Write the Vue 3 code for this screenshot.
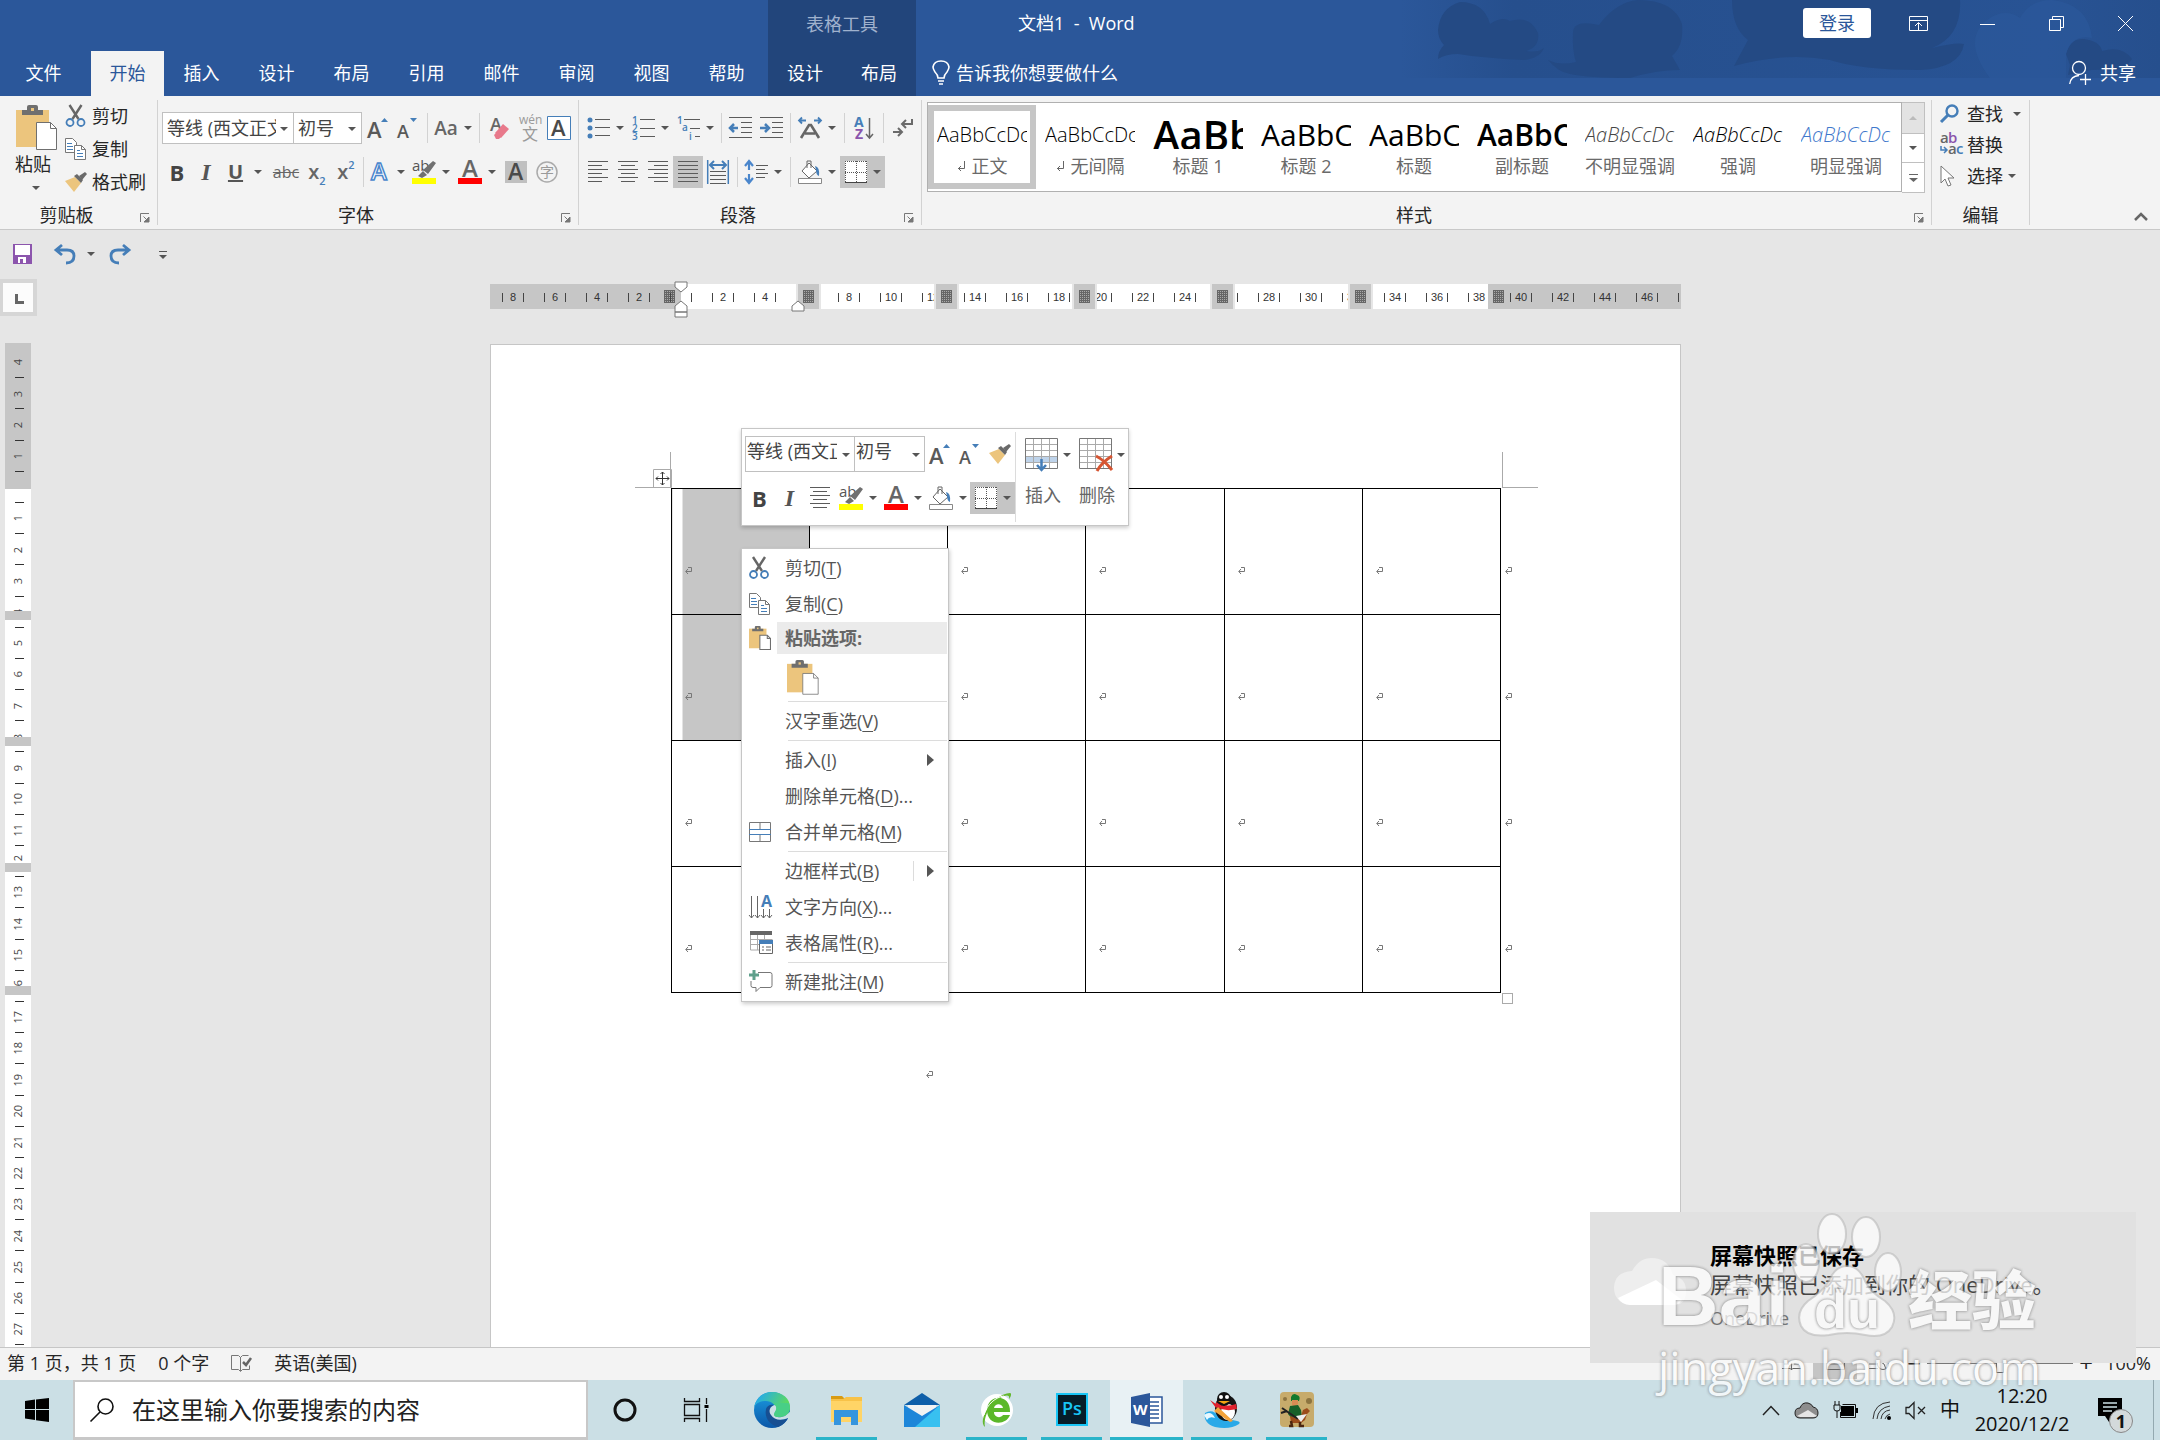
<script setup>
import { h } from 'vue'

const F = 'font-family="Open Sans, Noto Sans CJK SC, sans-serif"'
const brush = '<path d="M1 9l10-4 6 6-7 9z" fill="#ecc57d"/><path d="M10 4l3-2 6 6-2 3z" fill="#6a6a6a"/><path d="M15 4l6-4 2 2-5 6z" fill="#6a6a6a"/>'
const rows = (list, c = '#5b5b5b') => list.map(([x1, x2, y]) => `<path d="M${x1} ${y}.5H${x2}" stroke="${c}"/>`).join('')
const lines = {
  left: [[0, 20, 1], [0, 14, 5], [0, 20, 9], [0, 14, 13], [0, 20, 17], [0, 14, 21]],
  center: [[0, 20, 1], [3, 17, 5], [0, 20, 9], [3, 17, 13], [0, 20, 17], [3, 17, 21]],
  right: [[0, 20, 1], [6, 20, 5], [0, 20, 9], [6, 20, 13], [0, 20, 17], [6, 20, 21]],
  full: [[0, 20, 1], [0, 20, 5], [0, 20, 9], [0, 20, 13], [0, 20, 17], [0, 20, 21]]
}
const clip = '<path d="M0 5h33v37H0z" fill="#ecc57d"/><path d="M6 5h5V2q0-2 2-2h7q2 0 2 2v3h5v5H6z" fill="#6f6f6f"/><path d="M15 3h3v3h-3z" fill="#ecc57d"/><path d="M20.5 17.500h14l6 6v21h-20z" fill="#fff" stroke="#6f6f6f"/><path d="M34.500 17.500v6h6" fill="none" stroke="#6f6f6f"/>'

const icons = {
  caret: [8, 4, '<path d="M0 0h8L4 4z" fill="#555"/>'],
  caretRight: [7, 12, '<path d="M0 0l7 6-7 6z" fill="#555"/>'],
  paste: [41, 45, clip],
  pasteBig: [32, 35, `<g transform="scale(.77)">${clip}</g>`],
  pasteSmall: [22, 24, `<g transform="scale(.53)">${clip.replaceAll('stroke="#6f6f6f"', 'stroke="#6f6f6f" stroke-width="2"')}</g>`],
  cut: [20, 22, '<path d="M4 0l9 14M16 0L7 14" stroke="#666" stroke-width="2.400" fill="none"/><circle cx="4.500" cy="17.500" r="3.500" fill="none" stroke="#457eb8" stroke-width="1.800"/><circle cx="15.500" cy="17.500" r="3.500" fill="none" stroke="#457eb8" stroke-width="1.800"/>'],
  copy: [21, 22, '<path d="M.5.5h7l4 4v10H.5z" fill="#fff" stroke="#777"/><path d="M2 5.500h5M2 8.500h6M2 11.500h6" stroke="#457eb8"/><path d="M9.500 7.500h7l4 4v10h-11z" fill="#fff" stroke="#777"/><path d="M16.500 7.500v4h4" fill="none" stroke="#777"/><path d="M12 12.500h3M12 15.500h6M12 18.500h6" stroke="#457eb8"/>'],
  brush: [23, 20, brush],
  launcher: [10, 10, '<path d="M.5 9V.5H9" fill="none" stroke="#777"/><path d="M3.500 3.500L8 8M9 4v5H4z" stroke="#777" fill="#777"/>'],
  grow: [22, 24, `<text x="0" y="22" font-size="22" font-weight="600" fill="#595959" ${F}>A</text><path d="M14 6h7l-3.500-4z" fill="#457eb8"/>`],
  shrink: [22, 24, `<text x="0" y="22" font-size="18" font-weight="600" fill="#595959" ${F}>A</text><path d="M13 2h7l-3.500 4z" fill="#457eb8"/>`],
  clear: [22, 24, `<text x="0" y="15" font-size="18" font-weight="600" fill="#666" ${F}>A</text><path d="M5 17l8-9 6 5-8 9z" fill="#e8798b"/><path d="M4 19l2-2 5 4-2 2H6z" fill="#e8798b"/>`],
  wen: [22, 28, `<text x="0" y="10" font-size="12" fill="#9a9a9a" ${F}>wén</text><text x="3" y="26" font-size="16" fill="#9a9a9a" ${F}>文</text>`],
  boxed: [24, 24, `<path d="M.5.5h23v23H.5z" fill="#fff" stroke="#457eb8"/><text x="4" y="20" font-size="22" font-weight="600" fill="#4a4a4a" ${F}>A</text>`],
  outline: [22, 24, `<text x="2" y="20" font-size="24" font-weight="600" fill="#fff" stroke="#4a86cc" stroke-width="1.500" ${F}>A</text>`],
  highlight: [24, 24, `<text x="0" y="11" font-size="15" fill="#555" ${F}>ab</text><path d="M6 16l5-5 4 4-5 3zM11 10L21 1l3 2-8 11z" fill="#707070"/><path d="M0 18h24v6H0z" fill="#ff0"/>`],
  fontColor: [24, 24, `<text x="4" y="17" font-size="24" font-weight="600" fill="#666" ${F}>A</text><path d="M0 18h24v6H0z" fill="red"/>`],
  shaded: [22, 22, `<path d="M0 0h22v22H0z" fill="#c0c0c0"/><text x="3" y="19" font-size="23" font-weight="600" fill="#4a4a4a" ${F}>A</text>`],
  circled: [22, 22, `<circle cx="11" cy="11" r="10" fill="none" stroke="#aaa" stroke-width="1.500"/><text x="4" y="16" font-size="14" fill="#9a9a9a" ${F}>字</text>`],
  bullets: [23, 22, '<g fill="#457eb8"><circle cx="3" cy="3" r="2.500"/><circle cx="3" cy="11" r="2.500"/><circle cx="3" cy="19" r="2.500"/></g>' + rows([[8, 23, 2], [8, 23, 10], [8, 23, 18]])],
  numbers: [23, 24, `<g fill="#457eb8" font-size="10" font-weight="600" ${F}><text x="0" y="8">1</text><text x="0" y="16">2</text><text x="0" y="24">3</text></g>` + rows([[8, 23, 3], [8, 23, 12], [8, 23, 20]])],
  levels: [23, 24, `<g fill="#457eb8" font-size="10" font-weight="600" ${F}><text x="0" y="8">1</text><text x="5" y="15">a</text><text x="12" y="24">i</text></g>` + rows([[7, 23, 3], [13, 23, 12], [18, 23, 20]])],
  outdent: [23, 22, rows([[0, 23, 0], [12, 23, 5], [12, 23, 10], [12, 23, 15], [0, 23, 20]]) + '<path d="M9 11H2M5 7l-4 4 4 4" stroke="#457eb8" stroke-width="2.500" fill="none"/>'],
  indent: [23, 22, rows([[0, 23, 0], [12, 23, 5], [12, 23, 10], [12, 23, 15], [0, 23, 20]]) + '<path d="M0 11h7M5 7l4 4-4 4" stroke="#457eb8" stroke-width="2.500" fill="none"/>'],
  asian: [24, 22, '<path d="M1 3.500h7M4 .5l-3 3 3 3M23 3.500h-7M20 .5l3 3-3 3" stroke="#457eb8" stroke-width="1.800" fill="none"/><path d="M3 21l8-13h2l8 13M7 16.500h10" stroke="#666" stroke-width="2.600" fill="none"/>'],
  sort: [20, 24, `<text x="0" y="11" font-size="14" font-weight="700" fill="#457eb8" ${F}>A</text><text x="1" y="23" font-size="14" font-weight="700" fill="#8a55ac" ${F}>Z</text><path d="M15.500 2v20M12 18l3.500 4 3.500-4" stroke="#666" stroke-width="1.500" fill="none"/>`],
  marks: [20, 20, '<path d="M19 1v5h-9M13 2L9 6l4 4M0 14h8M5 10l4 4-4 4" stroke="#6a6a6a" stroke-width="2" fill="none"/>'],
  left: [20, 24, rows(lines.left)],
  center: [20, 24, rows(lines.center)],
  right: [20, 24, rows(lines.right)],
  full: [20, 24, rows(lines.full)],
  spread: [22, 24, '<path d="M.7 0v24M21.300 0v24" stroke="#457eb8" stroke-width="1.500"/><path d="M4 5h14M7 1L3 5l4 4M15 1l4 4-4 4" stroke="#457eb8" stroke-width="2" fill="none"/>' + rows([[3, 19, 11], [3, 19, 15], [3, 19, 19], [3, 19, 23]])],
  spacing: [23, 24, '<path d="M4 2v8M4 14v8M0 6l4-5 4 5M0 18l4 5 4-5" stroke="#4a86cc" stroke-width="2.200" fill="none"/>' + rows([[11, 23, 5], [11, 20, 9], [11, 23, 13], [11, 20, 17]])],
  bucket: [24, 24, '<path d="M4 11l7-8 8 8-8 7z" fill="#fff" stroke="#666"/><path d="M9 8V1h4v7" fill="none" stroke="#666"/><path d="M17 6q5 1 4 10-3-1-3-6z" fill="#457eb8"/><path d="M.5 18.500h23v5H.5z" fill="#fff" stroke="#888"/>'],
  borders: [22, 22, '<path d="M0 0h22v22H0z" fill="#fff"/><path d="M.5 0v21M11.500 0v21M21.500 0v21M0 .5h22M0 11.500h22" stroke="#555" stroke-dasharray="1 1"/><path d="M0 21.500h22" stroke="#444"/>'],
  find: [19, 20, '<circle cx="12" cy="7" r="5.500" fill="none" stroke="#457eb8" stroke-width="2.400"/><path d="M8 11l-7 7" stroke="#457eb8" stroke-width="3"/>'],
  replace: [23, 24, `<g font-size="15" font-weight="600" ${F}><text x="0" y="10" fill="#666">a</text><text x="8" y="10" fill="#8a55ac">b</text><text x="8" y="21" fill="#666">a</text><text x="16" y="21" fill="#457eb8">c</text></g><path d="M1 13v4h5M4 14l3 3-3 3" stroke="#457eb8" stroke-width="1.500" fill="none"/>`],
  pointer: [15, 22, '<path d="M1 1v17l4-4 3 7 3-1-3-7h6z" fill="#fff" stroke="#777"/>'],
  save: [19, 20, '<path d="M0 0h19v20H0z" fill="#8c55ad"/><path d="M2 1h15v10H2zM5 13h8v6H5z" fill="#fff"/><path d="M7 15h3v4H7z" fill="#8c55ad"/>'],
  undo: [22, 20, '<path d="M2 6h11q7 0 7 6 0 7-8 7M8 1L2 6l6 5" fill="none" stroke="#457eb8" stroke-width="2.800"/>'],
  redo: [22, 20, '<path d="M20 6H9q-7 0-7 6 0 7 8 7M14 1l6 5-6 5" fill="none" stroke="#457eb8" stroke-width="2.800"/>'],
  more: [8, 8, '<path d="M0 0h8v1H0zM0 4h8L4 8z" fill="#555"/>'],
  moreStyles: [9, 8, '<path d="M0 0h9v1H0zM0 4h9L4.500 8z" fill="#666"/>'],
  up: [8, 4, '<path d="M0 4h8L4 0z" fill="#bbb"/>'],
  collapse: [14, 9, '<path d="M1 8l6-6 6 6" fill="none" stroke="#666" stroke-width="2.500"/>'],
  bulb: [18, 25, '<path d="M6 18q0-3-3-6-2-3-2-5 1-6 8-6t8 6q0 2-2 5-3 3-3 6zM6 21h6M7 24h4" fill="none" stroke="#fff" stroke-width="1.600"/>'],
  ribbonMode: [19, 15, '<path d="M.5.5h18v14H.5zM0 4.500h19M9.500 14V7M6 10l3.500-3.500L13 10" fill="none" stroke="#fff"/>'],
  min: [15, 15, '<path d="M0 8.500h15" stroke="#fff"/>'],
  restore: [15, 15, '<path d="M.5 3.500h11v11H.5zM3.500 3V.5h11v11H12" fill="none" stroke="#fff"/>'],
  close: [15, 15, '<path d="M0 0l15 15M15 0L0 15" stroke="#fff"/>'],
  share: [23, 24, '<circle cx="10" cy="7" r="6.500" fill="none" stroke="#fff" stroke-width="1.300"/><path d="M.7 23q1-8 9.300-8.500M11 18.500h11M16.500 13v11" fill="none" stroke="#fff" stroke-width="1.300"/>'],
  tabStop: [9, 10, '<path d="M1.500 0v8.500H9" fill="none" stroke="#666" stroke-width="3"/>'],
  ret: [7, 8, '<path d="M3 .5h3.500v4H1M3 2L.7 4.500 3 7" fill="none" stroke="#777"/>'],
  retStyle: [8, 10, '<path d="M7.500 0v7.500H1M4 5L1.500 7.500 4 10" fill="none" stroke="#666"/>'],
  move: [19, 19, '<path d="M.5.5h18v18H.5z" fill="#fff" stroke="#aaa"/><path d="M9.500 3v13M3 9.500h13M7.500 5l2-2 2 2M7.500 14l2 2 2-2M5 7.500l-2 2 2 2M14 7.500l2 2-2 2" fill="none" stroke="#333"/>'],
  insertCells: [34, 35, '<path d="M.5 1.500h32v30H.5z" fill="#fff" stroke="#777"/><path d="M1 19h31v6H1z" fill="#bed3ea"/><path d="M8.500 2v29M16.500 2v29M24.500 2v29M1 7.500h31M1 13.500h31M1 19.500h31M1 25.500h31" stroke="#aaa"/><path d="M16.500 22v11M12 28l4.500 5 4.500-5" fill="none" stroke="#457eb8" stroke-width="2.500"/>'],
  deleteCells: [34, 34, '<path d="M.5.5h32v30H.5z" fill="#fff" stroke="#777"/><path d="M8.500 1v29M16.500 1v29M24.500 1v29M1 6.500h31M1 12.500h31M1 18.500h31M1 24.500h31" stroke="#aaa"/><path d="M17 18q8 4 16 14M33 18q-10 6-15 15" fill="none" stroke="#d65532" stroke-width="3"/>'],
  merge: [22, 20, '<path d="M.5.5h21v19H.5zM11 0v7M11 13v7" fill="none" stroke="#777"/><path d="M0 7.500h22M0 12.500h22" stroke="#457eb8"/>'],
  direction: [24, 25, `<text x="12" y="12" font-size="16" font-weight="700" fill="#457eb8" ${F}>A</text><path d="M2.500 1v22M8.500 1v22M14.500 14v9M20.500 14v9M0 20l2.500 3L5 20M6 20l2.500 3 2.500-3M12 20l2.500 3 2.500-3M18 20l2.500 3 2.500-3" fill="none" stroke="#666"/>`],
  props: [24, 24, '<path d="M1.500 1v18H10M1.500 8.500h22M1.500 13.500H10M8.500 4v15M15.500 4v6" fill="none" stroke="#aaa"/><path d="M1 0h22v4H1z" fill="#666"/><path d="M10.500 9.500h13v13h-13z" fill="#fff" stroke="#666"/><path d="M10 9h14v4H10z" fill="#457eb8"/><path d="M13 16h2M13 19h2M17 16h5M17 19h5" stroke="#666"/>'],
  comment: [24, 24, '<path d="M9 2.500h12q2 0 2 2v11q0 2-2 2H11l-4 4v-4H4q-2 0-2-2V11" fill="none" stroke="#777"/><path d="M5 0v10M0 5h10" stroke="#5fa08c" stroke-width="3"/>'],
  book: [21, 20, '<path d="M.5 2.500h7l2 2 2-2h6M.5 2.500v14h7l2 2 2-2h7v-4M9.500 4v14" fill="none" stroke="#777"/><path d="M12 9l3 3 5-7" fill="none" stroke="#666" stroke-width="2.500"/>'],
  readView: [19, 14, '<path d="M0 1.500h8l1.500 1 1.500-1h8M0 12.500h8l1.500 1 1.500-1h8M9.500 3v11M2 5h5M2 8h5M12 5h5M12 8h5" stroke="#666" fill="none"/>'],
  printView: [19, 14, '<path d="M.5 1.500h18v12H.5zM3 5h13M3 8h13" stroke="#666" fill="none"/>'],
  webView: [20, 14, '<path d="M0 1.500h12M0 5h8M0 8h8M0 12.500h9" stroke="#666"/><circle cx="14" cy="8" r="5.500" fill="none" stroke="#666"/><path d="M10 5l5 3 2 5" stroke="#666" fill="none"/>'],
  windows: [24, 24, '<path d="M0 3l10-1.500V11H0zM11 1.400L24 0v11H11zM0 12h10v10L0 20.500zM11 12h13v12l-13-1.700z"/>'],
  search: [24, 24, '<circle cx="15.500" cy="8.500" r="7.500" fill="none" stroke="#111" stroke-width="1.600"/><path d="M10 14l-9.500 9.500" stroke="#111" stroke-width="1.600"/>'],
  cortana: [24, 24, '<circle cx="12" cy="12" r="10" fill="none" stroke="#111" stroke-width="3"/>'],
  taskView: [25, 24, '<path d="M1.500 0v3.500h15V0M1.500 24v-3.500h15V24M1.500 6.500h15v11h-15zM23.500 0v6M23.500 11v13" fill="none" stroke="#111" stroke-width="1.300"/><path d="M21.500 7h4v3h-4z"/>'],
  edge: [38, 38, '<defs><linearGradient id="eg" x1="0" y1="0" x2="1" y2=".4"><stop offset=".2" stop-color="#28aee0"/><stop offset="1" stop-color="#5fdc57"/></linearGradient><linearGradient id="eb" x1="0" y1="0" x2="0" y2="1"><stop stop-color="#1b9de2"/><stop offset="1" stop-color="#0b57a8"/></linearGradient></defs><circle cx="19" cy="19" r="18" fill="url(#eb)"/><path d="M1 17C3 6 11 1 19 1c11 0 18 7 18 15 0 7-5 10-11 10-5 0-6-2-4-5 3-5-2-11-9-11-6 0-11 3-12 7z" fill="url(#eg)"/><path d="M13 18c-2 9 4 16 12 18 5-2 8-5 10-9-6 3-16 2-18-7 0-4 2-5 4-6-4-1-7 1-8 4z" fill="#174f92"/><path d="M22 14c-5 1-7 6-4 10 3 5 10 6 17 3l3 6 0-13-6 5c-9 3-12 0-10-4 2-2 2-5 0-7z" fill="#cbdfe5"/><path d="M22 21c3-5 0-8-2-9h16c3 9-3 14-10 14-5 0-6-2-4-5z" fill="#48cf86"/>'],
  folder: [34, 30, '<path d="M1 1h11l4 4H1z" fill="#d99b12"/><path d="M1 5h31v22H1z" fill="#ffd466"/><path d="M4 30V15h24v15h-7v-8H11v8z" fill="#3595de"/><path d="M1 4h12l3-2h16v4H1z" fill="#f8c248"/>'],
  mail: [38, 36, '<path d="M1 13L19 1l18 12z" fill="#0f5fa9"/><path d="M5 13h28v15H5z" fill="#f3f3f3"/><path d="M1 13l18 11L37 13v22H1z" fill="#1d86d9"/><path d="M37 13L12 35h25z" fill="#38c0f0"/>'],
  browser: [36, 38, '<circle cx="18" cy="19" r="16" fill="#fff"/><path d="M8 21h23c1-18-22-19-23-2 0 16 19 16 23 5h-7c-3 4-9 2-9-3" fill="#5bb82a"/><path d="M15 17h9c-1-5-8-5-9 0z" fill="#fff"/><path d="M6 36C-2 29 14 3 31 2c2 0 1 4-1 6 1-4-2-4-5-3C13 10 4 24 6 36z" fill="#62b82c"/><path d="M5 24C8 13 17 6 25 5" stroke="#fff" fill="none"/>'],
  ps: [34, 34, `<path d="M1 0h32v33H1z" fill="#19c5f5"/><path d="M3 2h28v29H3z" fill="#061d29"/><text x="7" y="22" font-size="18" font-weight="600" fill="#19c5f5" ${F}>Ps</text>`],
  word: [34, 34, `<path d="M16 4h16v26H16z" fill="#fff" stroke="#2b579a" stroke-width="1.500"/><path d="M20 9h9M20 13h9M20 17h9M20 21h9M20 25h9" stroke="#2b579a" stroke-width="1.500"/><path d="M1 4l19-4v34L1 30z" fill="#2b579a"/><text x="3" y="22" font-size="15" font-weight="700" fill="#fff" ${F}>W</text>`],
  qq: [38, 38, '<path d="M2 22q8-5 14 4l18 4q4 1 2 3-9 6-24 3Q0 32 2 22z" fill="#29a9e8"/><path d="M1 24q7-5 11 3-6-2-8 2z" fill="#e7f8ff"/><ellipse cx="23" cy="17" rx="11" ry="13" fill="#151515"/><ellipse cx="25" cy="21" rx="7" ry="8" fill="#fff"/><path d="M13 11q8 6 20 2l1 5q-12 3-21-2zM7 9l9 6-3 2z" fill="#e2202c"/><circle cx="21" cy="8" r="7" fill="#111"/><circle cx="18" cy="6" r="2" fill="#fff"/><circle cx="24" cy="6" r="2" fill="#fff"/><path d="M15 10h12l-6 3z" fill="#f2a313"/><path d="M15 16l15 14-3 1-16-11z" fill="#f4a33a"/>'],
  game: [36, 38, '<rect x="1" y="1" width="34" height="35" rx="4" fill="#c7ab6b"/><circle cx="30" cy="10" r="3" fill="#8c7440"/><circle cx="6" cy="8" r="2" fill="#8c7440"/><path d="M12 6q2-5 6-2 4 1 2 6h-8z" fill="#127a2d"/><path d="M13 9h6v4l-3 3-3-2z" fill="#d98b54"/><path d="M11 15l8-1 3 5 1 7-9 3-5-6z" fill="#17602a"/><path d="M11 25l10 3 3-9 4-2 3 3-3 3-2 6-4 3H12z" fill="#9b4c1b"/><path d="M3 17l16 11M2 22l6-2" stroke="#222" stroke-width="2"/><path d="M17 25l11-2-6 8z" fill="#eee"/><path d="M12 30l1 5h-3M21 31v4h4" stroke="#4b2610" stroke-width="2.500" fill="none"/>'],
  chevron: [18, 11, '<path d="M1 10l8-8.500L17 10" fill="none" stroke="#222" stroke-width="1.500"/>'],
  cloud: [25, 18, '<path d="M6 17q-5 0-5-5t5-5q2-6 8-5 4 1 5 4 5 1 5 6t-5 5z" fill="#8d8d8d" stroke="#222"/><path d="M3 15l11-6 9 6-3 1H6z" fill="#e5e5e5"/>'],
  battery: [25, 18, '<path d="M9.500 3.500h13v13h-15V11" fill="none" stroke="#111"/><path d="M8 5h13v10H8zM23 7h2v5h-2z"/><path d="M1 4h6v4q0 2-3 2t-3-2zM4 10v7M2 0v4M6 0v4" fill="#cbdfe5" stroke="#111"/>'],
  wifi: [19, 19, '<g fill="none" stroke="#333"><path d="M1 18Q2 2 18 1M5 18Q6 7 18 5M9 18q1-8 9-9M13 18q1-4 5-5"/></g><circle cx="17" cy="17" r="2"/>'],
  mute: [21, 19, '<path d="M1 6.500h3l5-5v16l-5-5H1z" fill="none" stroke="#222" stroke-width="1.300"/><path d="M13 6l7 7M20 6l-7 7" stroke="#222" stroke-width="1.300"/>'],
  notice: [24, 24, '<path d="M0 0h24v18h-9l-4 6-4-6H0z"/><path d="M5 5h14M5 9h14M5 13h9" stroke="#cbdfe5" stroke-width="1.300"/>'],
  toastCloud: [72, 48, '<path d="M14 46Q0 44 0 29 1 14 18 13 25 0 38 0q16 0 21 17 13 3 13 16 0 14-12 14H16z" fill="#eee"/><path d="M4 40l38-18 26 20q-3 5-9 5H16q-8 0-12-7z" fill="#fff"/>'],
  paw: [110, 126, '<g fill="#fff" stroke="#b5b5b5" stroke-opacity=".7" stroke-width="2"><ellipse cx="38" cy="22" rx="14" ry="20"/><ellipse cx="72" cy="25" rx="14" ry="20"/><ellipse cx="12" cy="51" rx="13" ry="19"/><ellipse cx="94" cy="60" rx="13" ry="19"/><path d="M53 54q12 0 18 15 5 11 20 20 14 12 7 26-7 12-27 8-18-4-36 0-22 3-28-9-6-14 7-25 15-10 21-20 6-15 18-15z"/></g>'],
  indentTop: [14, 12, '<path d="M1 1h12v5l-6 5-6-5z" fill="#fff" stroke="#777"/>'],
  indentBottom: [14, 18, '<path d="M1 12V6l6-5 6 5v6zM1 12h12v5H1z" fill="#fff" stroke="#777"/>'],
  indentRight: [14, 12, '<path d="M1 11V6l6-5 6 5v5z" fill="#fff" stroke="#777"/>']
}

const Icon = (p) => {
  const [w, hh, body] = icons[p.name]
  return h('svg', { width: w, height: hh, viewBox: `0 0 ${w} ${hh}`, 'aria-hidden': 'true', innerHTML: body })
}
Icon.props = ['name']

const tabs = ['插入', '设计', '布局', '引用', '邮件', '审阅', '视图', '帮助']
const styles = [
  { label: '正文', cls: 'body', text: 'AaBbCcDc', mark: true },
  { label: '无间隔', cls: 'body', text: 'AaBbCcDc', mark: true },
  { label: '标题 1', cls: 'h1', text: 'AaBb' },
  { label: '标题 2', cls: 'h2', text: 'AaBbC' },
  { label: '标题', cls: 'h2', text: 'AaBbC' },
  { label: '副标题', cls: 'h2 strong', text: 'AaBbC' },
  { label: '不明显强调', cls: 'body it soft', text: 'AaBbCcDc' },
  { label: '强调', cls: 'body it', text: 'AaBbCcDc' },
  { label: '明显强调', cls: 'body it accent', text: 'AaBbCcDc' }
]
const ruler = Array.from({ length: 29 }, (_, i) => i * 2 - 8)
const vruler = Array.from({ length: 32 }, (_, i) => i - 4)
const apps = [
  { icon: 'edge', name: 'Edge' },
  { icon: 'folder', name: '文件资源管理器', open: true },
  { icon: 'mail', name: '邮件' },
  { icon: 'browser', name: '浏览器', open: true },
  { icon: 'ps', name: 'Photoshop', open: true },
  { icon: 'word', name: 'Word', open: true, active: true },
  { icon: 'qq', name: 'QQ', open: true },
  { icon: 'game', name: '游戏', open: true }
]
</script>

<template>
  <div class="desktop">
    <header class="top">
      <svg class="art" width="760" height="78" viewBox="0 0 760 78" aria-hidden="true">
        <defs><linearGradient id="fade"><stop stop-color="#264f8d" stop-opacity="0" /><stop offset=".15" stop-color="#264f8d" /><stop offset=".85" stop-color="#285394" /><stop offset="1" stop-color="#264f8d" /></linearGradient></defs>
        <path d="M0 0h760v78H0z" fill="url(#fade)" />
        <g fill="#244a84">
          <path d="M38 30Q40 8 60 2q24 0 30 22 12-8 20-3 20-6 28 12 2 14-12 18 12 2 18-3-4 10-20 12-40-2-66-6-12 0-20 5 0-8 6-14-6-6-6-15z" />
          <path d="M173 33q0-14 26-8Q216 2 238 0q36 0 44 24 2 22-10 32l8 14q-24 0-50 8-40 0-60-4-12-2-22-14 12 6 28 2-4-12-3-29z" />
          <path d="M332 0h228q2 36-28 48 24-6 32-4-4 24-44 26-60 0-90-10-46-8-96 6l14-26q-16-12-16-40z" />
          <path d="M666 54q4-16 18-15 16 2 18 12 20-6 30 8-6 10-20 12-18-4-44 4l2-10z" />
        </g>
        <path d="M590 78q-30-40 0-60 16-10 30 0Q630 0 652 0q36 4 40 38-20-4-26 16v24z" fill="#2b579a" opacity=".8" />
      </svg>
      <div class="blank"></div>
      <div class="context-title">表格工具</div>
      <div class="title-row">
        <h1>文档1&nbsp; -&nbsp; Word</h1>
        <div class="window-controls">
          <button class="login">登录</button>
          <button aria-label="功能区显示选项"><Icon name="ribbonMode" /></button>
          <button aria-label="最小化"><Icon name="min" /></button>
          <button aria-label="还原"><Icon name="restore" /></button>
          <button aria-label="关闭"><Icon name="close" /></button>
        </div>
      </div>
      <nav class="tabs">
        <button class="file">文件</button>
        <button class="home">开始</button>
        <button v-for="t in tabs" :key="t">{{ t }}</button>
      </nav>
      <nav class="context-tabs"><button>设计</button><button>布局</button></nav>
      <div class="tell-row">
        <button class="tell"><Icon name="bulb" />告诉我你想要做什么</button>
        <button class="share"><Icon name="share" />共享</button>
      </div>
    </header>

    <section class="ribbon">
      <div class="group clipboard">
        <div class="clip-body">
          <button class="paste"><Icon name="paste" /><span>粘贴</span><Icon name="caret" /></button>
          <div class="clip-list">
            <button><Icon name="cut" />剪切</button>
            <button><Icon name="copy" />复制</button>
            <button><Icon name="brush" />格式刷</button>
          </div>
        </div>
        <footer><span>剪贴板</span><button aria-label="剪贴板选项"><Icon name="launcher" /></button></footer>
      </div>

      <div class="group font">
        <div class="rows">
          <div class="row font-one">
            <div class="combo"><select aria-label="字体"><option>等线 (西文正文)</option></select><Icon name="caret" /></div>
            <div class="combo"><select aria-label="字号"><option>初号</option></select><Icon name="caret" /></div>
            <button aria-label="增大字号"><Icon name="grow" /></button>
            <button aria-label="减小字号"><Icon name="shrink" /></button>
            <i class="sep"></i>
            <button class="split"><span class="aa">Aa</span><Icon name="caret" /></button>
            <i class="sep"></i>
            <button aria-label="清除格式"><Icon name="clear" /></button>
            <button aria-label="拼音指南"><Icon name="wen" /></button>
            <button aria-label="字符边框"><Icon name="boxed" /></button>
          </div>
          <div class="row font-two">
            <button class="b">B</button>
            <button class="i">I</button>
            <button class="split wide"><u class="u">U</u><Icon name="caret" /></button>
            <button><s>abc</s></button>
            <button class="script">x<sub>2</sub></button>
            <button class="script">x<sup>2</sup></button>
            <i class="sep"></i>
            <button class="split" aria-label="文本效果"><Icon name="outline" /><Icon name="caret" /></button>
            <button class="split" aria-label="突出显示"><Icon name="highlight" /><Icon name="caret" /></button>
            <button class="split" aria-label="字体颜色"><Icon name="fontColor" /><Icon name="caret" /></button>
            <button aria-label="字符底纹"><Icon name="shaded" /></button>
            <button aria-label="带圈字符"><Icon name="circled" /></button>
          </div>
        </div>
        <footer><span>字体</span><button aria-label="字体选项"><Icon name="launcher" /></button></footer>
      </div>

      <div class="group para">
        <div class="rows">
          <div class="row para-one">
            <button class="split" aria-label="项目符号"><Icon name="bullets" /><Icon name="caret" /></button>
            <button class="split" aria-label="编号"><Icon name="numbers" /><Icon name="caret" /></button>
            <button class="split" aria-label="多级列表"><Icon name="levels" /><Icon name="caret" /></button>
            <i class="sep"></i>
            <button aria-label="减少缩进"><Icon name="outdent" /></button>
            <button aria-label="增加缩进"><Icon name="indent" /></button>
            <i class="sep"></i>
            <button class="split" aria-label="中文版式"><Icon name="asian" /><Icon name="caret" /></button>
            <i class="sep"></i>
            <button aria-label="排序"><Icon name="sort" /></button>
            <i class="sep"></i>
            <button aria-label="编辑标记"><Icon name="marks" /></button>
          </div>
          <div class="row para-two">
            <button aria-label="左对齐"><Icon name="left" /></button>
            <button aria-label="居中"><Icon name="center" /></button>
            <button aria-label="右对齐"><Icon name="right" /></button>
            <button class="on" aria-label="两端对齐"><Icon name="full" /></button>
            <button aria-label="分散对齐"><Icon name="spread" /></button>
            <i class="sep"></i>
            <button class="split" aria-label="行距"><Icon name="spacing" /><Icon name="caret" /></button>
            <i class="sep"></i>
            <button class="split" aria-label="底纹"><Icon name="bucket" /><Icon name="caret" /></button>
            <button class="split on" aria-label="边框"><Icon name="borders" /><Icon name="caret" /></button>
          </div>
        </div>
        <footer><span>段落</span><button aria-label="段落选项"><Icon name="launcher" /></button></footer>
      </div>

      <div class="group style-group">
        <div class="gallery">
          <div class="cells">
            <button v-for="(s, n) in styles" :key="s.label" :class="{ picked: n === 0 }">
              <span class="sample" :class="s.cls">{{ s.text }}</span>
              <span class="name"><Icon v-if="s.mark" name="retStyle" />{{ s.label }}</span>
            </button>
          </div>
          <div class="scroll">
            <button class="off" aria-label="上一行"><Icon name="up" /></button>
            <button aria-label="下一行"><Icon name="caret" /></button>
            <button aria-label="其他"><Icon name="moreStyles" /></button>
          </div>
        </div>
        <footer><span>样式</span><button aria-label="样式选项"><Icon name="launcher" /></button></footer>
      </div>

      <div class="group edit">
        <div class="edit-list">
          <button><span class="ico"><Icon name="find" /></span>查找<Icon name="caret" class="far" /></button>
          <button><span class="ico"><Icon name="replace" /></span>替换</button>
          <button><span class="ico"><Icon name="pointer" /></span>选择<Icon name="caret" class="near" /></button>
        </div>
        <footer><span>编辑</span></footer>
      </div>
      <button class="collapse" aria-label="折叠功能区"><Icon name="collapse" /></button>
    </section>

    <div class="quick">
      <button aria-label="保存"><Icon name="save" /></button>
      <button class="undo" aria-label="撤消"><Icon name="undo" /><Icon name="caret" /></button>
      <button aria-label="恢复"><Icon name="redo" /></button>
      <button class="custom" aria-label="自定义"><Icon name="more" /></button>
    </div>

    <main class="work">
      <div class="side">
        <button class="stop" aria-label="制表符"><Icon name="tabStop" /></button>
        <div class="vruler">
          <div class="vcells"><div v-for="n in vruler" :key="n"><span v-if="n">{{ Math.abs(n) }}</span></div></div>
          <i v-for="k in 4" :key="k" class="vbar" :class="'v' + k"></i>
        </div>
      </div>
      <div class="canvas">
        <div class="hruler">
          <div class="hcells"><div v-for="n in ruler" :key="n"><span v-if="n">{{ Math.abs(n) }}</span></div></div>
          <div class="stops"><i v-for="k in 6" :key="k"><b></b></i></div>
          <Icon name="indentTop" class="ind top-ind" />
          <Icon name="indentBottom" class="ind bot-ind" />
          <Icon name="indentRight" class="ind right-ind" />
        </div>
        <article class="page">
          <div class="sheet">
            <Icon name="move" class="move" />
            <i class="corner cl"></i><i class="corner cr"></i>
            <table>
              <tbody>
                <tr v-for="r in 4" :key="r">
                  <td v-for="c in 6" :key="c" :class="{ sel: c === 1 && r < 3 }">
                    <Icon name="ret" />
                    <Icon v-if="c === 6" name="ret" class="row-end" />
                  </td>
                </tr>
              </tbody>
            </table>
            <i class="resize"></i>
          </div>
          <Icon name="ret" class="end-mark" />

          <div class="mini">
            <div class="mini-left">
              <div class="mini-one">
                <div class="combo"><select aria-label="浮动字体"><option>等线 (西文正文)</option></select><Icon name="caret" /></div>
                <div class="combo"><select aria-label="浮动字号"><option>初号</option></select><Icon name="caret" /></div>
                <button aria-label="增大"><Icon name="grow" /></button>
                <button aria-label="减小"><Icon name="shrink" /></button>
                <button aria-label="格式刷"><Icon name="brush" /></button>
              </div>
              <div class="mini-two">
                <button class="b">B</button>
                <button class="i">I</button>
                <button aria-label="居中"><Icon name="center" /></button>
                <button class="split" aria-label="突出显示"><Icon name="highlight" /><Icon name="caret" /></button>
                <button class="split" aria-label="字体颜色"><Icon name="fontColor" /><Icon name="caret" /></button>
                <button class="split" aria-label="底纹"><Icon name="bucket" /><Icon name="caret" /></button>
                <button class="split on" aria-label="边框"><Icon name="borders" /><Icon name="caret" /></button>
              </div>
            </div>
            <button class="big"><span><Icon name="insertCells" /><Icon name="caret" /></span>插入</button>
            <button class="big"><span><Icon name="deleteCells" /><Icon name="caret" /></span>删除</button>
          </div>

          <div class="menu" role="menu">
            <button><span class="ico"><Icon name="cut" /></span>剪切(<u>T</u>)</button>
            <button><span class="ico"><Icon name="copy" /></span>复制(<u>C</u>)</button>
            <div class="head"><span class="ico"><Icon name="pasteSmall" /></span><strong>粘贴选项:</strong></div>
            <button class="paste-opt" aria-label="粘贴"><Icon name="pasteBig" /></button>
            <hr />
            <button><span class="ico"></span>汉字重选(<u>V</u>)</button>
            <hr />
            <button><span class="ico"></span>插入(<u>I</u>)<Icon name="caretRight" class="sub" /></button>
            <button><span class="ico"></span>删除单元格(<u>D</u>)...</button>
            <button><span class="ico"><Icon name="merge" /></span>合并单元格(<u>M</u>)</button>
            <hr />
            <button><span class="ico"></span>边框样式(<u>B</u>)<span class="sub ruled"><Icon name="caretRight" /></span></button>
            <button><span class="ico"><Icon name="direction" /></span>文字方向(<u>X</u>)...</button>
            <button><span class="ico"><Icon name="props" /></span>表格属性(<u>R</u>)...</button>
            <hr />
            <button><span class="ico"><Icon name="comment" /></span>新建批注(<u>M</u>)</button>
          </div>
        </article>
      </div>
      <div class="gutter"></div>
    </main>

    <footer class="status">
      <span>第 1 页，共 1 页</span>
      <span>0 个字</span>
      <Icon name="book" />
      <span>英语(美国)</span>
      <div class="views">
        <button aria-label="阅读视图"><Icon name="readView" /></button>
        <button class="on" aria-label="页面视图"><Icon name="printView" /></button>
        <button aria-label="Web 版式"><Icon name="webView" /></button>
        <button class="zoom-btn">−</button>
        <input type="range" aria-label="缩放" min="0" max="100" value="50" />
        <button class="zoom-btn">+</button>
        <span>100%</span>
      </div>
    </footer>

    <footer class="taskbar">
      <button class="start" aria-label="开始"><Icon name="windows" /></button>
      <label class="search"><Icon name="search" /><input type="text" aria-label="搜索" placeholder="在这里输入你要搜索的内容" /></label>
      <button class="sys" aria-label="Cortana"><Icon name="cortana" /></button>
      <button class="sys view" aria-label="任务视图"><Icon name="taskView" /></button>
      <button v-for="a in apps" :key="a.icon" class="app" :class="{ open: a.open, active: a.active }" :aria-label="a.name"><Icon :name="a.icon" /></button>
      <div class="tray">
        <Icon name="chevron" /><Icon name="cloud" /><Icon name="battery" /><Icon name="wifi" /><Icon name="mute" />
        <span class="ime">中</span>
        <time>12:20<br />2020/12/2</time>
        <div class="notice"><Icon name="notice" /><b>1</b></div>
      </div>
    </footer>

    <aside class="toast">
      <Icon name="toastCloud" />
      <div>
        <h2>屏幕快照已保存</h2>
        <p>屏幕快照已添加到你的 OneDrive。</p>
        <small>OneDrive</small>
      </div>
    </aside>
    <div class="mark">
      <div class="logo"><span class="bai">Bai</span><div class="paw"><Icon name="paw" /><span>du</span></div><span class="jy">经验</span></div>
      <div class="url">jingyan.baidu.com</div>
    </div>
  </div>
</template>

<style>
body { background: #e6e6e6; overflow: hidden; }
</style>

<style scoped>
* { box-sizing: border-box; }
.desktop { position: relative; min-height: 100vh; display: flex; flex-direction: column; background: #e6e6e6; color: #262626; font: 18px/24px "Open Sans", "Noto Sans CJK SC", sans-serif; }
button { border: 0; padding: 0; margin: 0; background: none; font: inherit; color: inherit; display: flex; align-items: center; justify-content: center; white-space: nowrap; }
svg { display: block; flex: none; overflow: visible; }

.top { position: relative; display: grid; grid-template-columns: 768px 148px 1fr; grid-template-rows: 51px 45px; background: #2b579a; color: #fff; }
.art { position: absolute; right: 0; top: 0; overflow: hidden; }
.context-title { background: #22457b; color: #a0b2ce; display: flex; align-items: center; justify-content: center; padding-bottom: 4px; }
.title-row { position: relative; display: flex; justify-content: space-between; align-items: flex-start; padding-left: 102px; }
h1 { margin: 0; font-size: 18px; font-weight: 400; line-height: 46px; }
.window-controls { display: flex; height: 46px; align-items: center; }
.window-controls button { width: 69px; height: 46px; }
.window-controls .login { width: 68px; height: 30px; background: #fff; color: #2b579a; border-radius: 3px; margin-right: 13px; }
.tabs { display: flex; }
.tabs button { width: 75px; padding-bottom: 2px; }
.tabs .file { width: 91px; padding-right: 4px; }
.tabs .home { width: 73px; background: #f3f3f3; color: #2b579a; }
.context-tabs { display: flex; background: #22457b; }
.context-tabs button { width: 74px; padding-bottom: 2px; }
.tell-row { position: relative; display: flex; justify-content: space-between; padding: 0 24px 2px 16px; }
.tell { gap: 6px; }
.share { gap: 8px; }

.ribbon { display: flex; height: 134px; background: #f3f3f3; border-bottom: 1px solid #c8c8c8; padding-top: 4px; position: relative; }
.group { height: 125px; border-right: 1px solid #d2d2d2; display: flex; flex-direction: column; justify-content: space-between; }
.group footer { height: 20px; line-height: 20px; position: relative; text-align: center; display: flex; justify-content: center; padding-right: 24px; }
.group footer button { position: absolute; right: 7px; top: 8px; }
.clipboard { width: 158px; }
.clip-body { display: flex; padding: 5px 0 0 15px; }
.paste { flex-direction: column; justify-content: flex-start; width: 42px; line-height: 28px; padding-bottom: 4px; }
.paste span { margin-right: 6px; }
.paste svg:last-child { margin-top: 8px; }
.clip-list { margin: -6px 0 0 7px; }
.clip-list button { height: 33px; justify-content: flex-start; gap: 5px; }
.clip-list svg { width: 23px; }
.rows { display: flex; flex-direction: column; padding: 12px 0 0 4px; gap: 12px; }
.row { display: grid; height: 32px; align-items: center; }
.row button { height: 32px; }
.font { width: 421px; }
.font-one { grid-template-columns: 132px 68px 31px 30px 8px 44px 8px 36px 22px 36px; }
.font-two { grid-template-columns: 30px 28px 50px 32px 30px 28px 6px 42px 46px 46px 32px 30px; }
.para { width: 343px; }
.para-one { grid-template-columns: 45px 45px 44px 8px 31px 30px 8px 46px 8px 31px 8px 32px; }
.para-two { grid-template-columns: 30px 30px 30px 30px 30px 8px 45px 8px 46px 45px; }
.sep { width: 1px; height: 30px; background: #d2d2d2; justify-self: center; }
.split { gap: 6px; }
.wide { gap: 11px; }
.on { background: #c5c5c5; }
.combo { position: relative; border: 1px solid #c0c0c0; background: #fff; height: 32px; }
.combo + .combo { border-left: 0; }
.combo select { appearance: none; border: 0; background: none; width: 100%; height: 100%; padding: 0 17px 0 4px; font: inherit; color: #444; text-overflow: clip; }
.combo svg { position: absolute; right: 5px; top: 14px; }
.aa { font-size: 19px; font-weight: 600; color: #666; }
.b { font-weight: 700; font-size: 22px; color: #444; }
.i { font: italic 700 24px "Liberation Serif", serif; color: #555; }
.u { font-weight: 700; font-size: 20px; color: #555; }
.font-two s { font-size: 16px; color: #666; }
.script { font-weight: 600; font-size: 20px; color: #666; }
.script sub, .script sup { font-size: 11px; color: #457eb8; line-height: 10px; }
.script sub { align-self: flex-end; padding-bottom: 2px; }
.script sup { align-self: flex-start; padding-top: 4px; }

.style-group { width: 1010px; padding: 2px 0 0 5px; }
.style-group footer { padding-right: 30px; }
.gallery { display: flex; height: 91px; }
.cells { display: flex; background: #fff; border: 1px solid #b0b0b0; width: 975px; height: 90px; padding-top: 2px; }
.cells button { width: 108px; height: 84px; flex: none; flex-direction: column; padding: 4px 3px 0; border: 6px solid transparent; }
.cells .picked { border-color: #c6c6c6; }
.sample { width: 90px; height: 40px; line-height: 40px; overflow: hidden; text-align: left; color: #000; font-size: 20px; }
.sample.body { font-weight: 300; }
.sample.h1 { font-size: 40px; font-weight: 600; }
.sample.h2 { font-size: 30px; }
.sample.strong { font-weight: 600; }
.sample.it { font-style: italic; }
.sample.soft { color: #444; }
.sample.accent { color: #3f78cc; }
.name { color: #6a6a6a; line-height: 34px; display: flex; align-items: center; gap: 7px; }
.scroll { width: 23px; display: grid; grid-template-rows: 32px 29px 30px; }
.scroll button { background: #fff; border: 1px solid #c0c0c0; border-left: 0; }
.scroll button + button { border-top: 0; }
.scroll .off { background: #e3e3e3; }
.edit { width: 98px; }
.edit footer { padding-right: 0; }
.edit-list { margin-top: -2px; padding: 0 0 0 8px; }
.edit-list button { height: 31px; justify-content: flex-start; }
.edit-list .ico { width: 27px; display: flex; }
.far { margin-left: 10px; }
.near { margin-left: 5px; }
.collapse { position: absolute; right: 12px; bottom: 8px; }

.quick { height: 48px; display: flex; align-items: center; padding-left: 13px; gap: 22px; }
.quick .undo { gap: 11px; }
.quick .custom { margin: 2px 0 0 6px; }
.quick button:nth-child(3) { margin-left: -8px; }

.work { flex: 1; display: grid; grid-template-columns: 37px 1fr 26px; }
.side { display: flex; flex-direction: column; }
.stop { width: 37px; height: 37px; border: 4px solid #d6d6d6; border-left-width: 3px; background: #fcfcfc; margin-top: 1px; padding: 3px 0 0 3px; }
.vruler { position: relative; flex: 1; width: 26px; margin: 27px 0 0 5px; padding: 4px 0 2px; background: linear-gradient(#c6c6c6 146px, #fff 146px); }
.vcells { display: flex; flex-direction: column; height: 100%; }
.vcells div { flex: 1; position: relative; display: flex; align-items: center; justify-content: center; }
.vcells div::after { content: ""; position: absolute; bottom: 0; left: 10px; width: 9px; height: 1px; background: #333; }
.vcells span { font: 11px/12px "Open Sans", sans-serif; color: #444; writing-mode: vertical-rl; transform: rotate(180deg); }
.vbar { position: absolute; left: 0; width: 26px; height: 9px; background: #c6c6c6; }
.v1 { top: 268px; }
.v2 { top: 394px; }
.v3 { top: 520px; }
.v4 { top: 643px; }
.canvas { width: 1191px; justify-self: center; display: flex; flex-direction: column; }
.hruler { position: relative; height: 25px; margin: 6px 0 35px; background: linear-gradient(90deg, #c6c6c6 191px, #fff 191px 998px, #c6c6c6 998px); }
.hcells { display: flex; height: 25px; overflow: hidden; padding-left: 2px; }
.hcells div { flex: 0 0 42px; position: relative; display: flex; align-items: center; justify-content: center; font: 11px/12px "Liberation Sans", sans-serif; color: #333; }
.hcells div::before, .hcells div::after { content: ""; position: absolute; top: 9px; width: 1px; height: 9px; background: #444; }
.hcells div::before { left: 10px; }
.hcells div::after { left: 31px; }
.stops { position: absolute; left: 308px; top: 0; display: flex; gap: 117px; }
.stops i { width: 21px; height: 25px; background: #c6c6c6; display: flex; align-items: center; justify-content: center; box-shadow: 2px 0 #e6e6e6, -2px 0 #e6e6e6; }
.stops i:last-child { box-shadow: none; }
.stops b, .hruler::before { width: 11px; height: 13px; background: repeating-linear-gradient(#666 0 1px, transparent 1px 2px), repeating-linear-gradient(90deg, #666 0 1px, #aaa 1px 2px); }
.ind { position: absolute; }
.top-ind { left: 184px; top: -3px; }
.bot-ind { left: 184px; top: 16px; }
.right-ind { left: 301px; top: 16px; }
.hruler::before { content: ""; position: absolute; left: 174px; top: 6px; }
.page { position: relative; flex: 1; background: #fff; border: 1px solid #c6c6c6; border-bottom: 0; padding: 143px 0 0 180px; }
.sheet { position: relative; width: 830px; }
.move { position: absolute; left: -18px; top: -19px; }
.corner { position: absolute; top: -36px; width: 36px; height: 36px; border-bottom: 1px solid #aaa; }
.cl { left: -36px; border-right: 1px solid #aaa; }
.cr { left: 831px; border-left: 1px solid #aaa; }
.resize { position: absolute; right: -12px; bottom: -11px; width: 11px; height: 11px; border: 1px solid #aaa; background: #fff; }
table { border-collapse: collapse; width: 830px; table-layout: fixed; }
td { position: relative; height: 126px; border: 1px solid #000; padding: 39px 0 0 13px; }
.sel { background: linear-gradient(90deg, #fff 10px, #c6c6c6 10px); }
.row-end { position: absolute; left: 142px; top: 78px; }
.end-mark { margin: 78px 0 0 255px; }

.mini { position: absolute; left: 250px; top: 83px; width: 388px; height: 98px; background: #fff; border: 1px solid #c6c6c6; box-shadow: 0 2px 4px #0003; display: flex; color: #444; }
.mini-left { width: 274px; margin: 3px 0; border-right: 1px solid #dcdcdc; padding: 4px 0 0 3px; }
.mini-one { display: grid; grid-template-columns: 110px 70px 30px 30px 29px; height: 36px; align-items: center; }
.mini-one .combo { height: 36px; }
.mini-one .combo select { padding: 0 17px 6px 1px; }
.mini-one .combo svg { top: 16px; right: 4px; }
.mini-two { display: grid; grid-template-columns: 29px 31px 30px 45px 45px 45px 45px; margin-top: 10px; }
.mini-two button { height: 32px; }
.big { flex-direction: column; width: 54px; padding-left: 9px; justify-content: flex-start; padding-top: 8px; line-height: 46px; color: #666; align-items: flex-start; }
.big span { display: flex; align-items: center; gap: 4px; height: 35px; }
.menu { position: absolute; left: 250px; top: 203px; width: 208px; padding: 1px 0; background: #fff; border: 1px solid #c6c6c6; box-shadow: 1px 2px 4px #0003; color: #555; }
.menu button { width: 100%; height: 36px; justify-content: flex-start; position: relative; }
.menu .ico { width: 43px; padding-left: 7px; display: flex; flex: none; }
.menu hr { border: 0; height: 1px; background: #dcdcdc; margin: 1px 1px 1px 46px; }
.menu u { text-underline-offset: 3px; }
.head { height: 32px; display: flex; align-items: center; background: linear-gradient(90deg, #fff 35px, #ebebeb 35px); margin-right: 1px; color: #666; }
.menu .paste-opt { height: 46px; padding-left: 45px; }
.sub { position: absolute; right: 14px; }
.ruled { padding-left: 13px; border-left: 1px solid #dcdcdc; height: 20px; display: flex; align-items: center; }

.status { height: 33px; background: #f3f3f3; border-top: 1px solid #c6c6c6; display: flex; align-items: center; padding: 0 9px 2px 7px; gap: 22px; }
.views { margin-left: auto; display: flex; align-items: center; height: 32px; }
.views button { width: 44px; height: 32px; }
.views .zoom-btn { width: 26px; font-size: 24px; }
.views input { appearance: none; width: 146px; height: 1px; margin: 0; background: #777; }
.views input::-webkit-slider-thumb { appearance: none; width: 8px; height: 20px; background: #f3f3f3; border: 1px solid #666; }
.views span { margin-left: 6px; }

.taskbar { height: 60px; background: #cbdfe5; display: flex; color: #111; }
.start { width: 73px; }
.search { width: 515px; border: 2px solid #c8c8c8; border-bottom-width: 3px; background: #fff; display: flex; align-items: center; padding-left: 15px; gap: 18px; }
.search input { flex: 1; border: 0; outline: 0; background: none; font: 24px/32px "Open Sans", "Noto Sans CJK SC", sans-serif; padding: 0; }
.search input::placeholder { color: #222; opacity: 1; }
.sys { width: 73px; }
.view { padding-right: 4px; }
.app { width: 75px; position: relative; }
.app.open::after { content: ""; position: absolute; left: 7px; right: 7px; bottom: 0; height: 3px; background: #2ab4c9; }
.app.active { background: linear-gradient(90deg, transparent 1px, #e8f1f4 1px 74px, transparent 74px); }
.app.active::after { left: 1px; right: 1px; }
.tray { margin-left: auto; display: flex; align-items: center; gap: 14px; padding-right: 38px; position: relative; }
.tray::after { content: ""; position: absolute; right: 6px; top: 0; width: 1px; height: 60px; background: #94a9b0; }
.ime { font-size: 20px; }
time { width: 96px; text-align: center; font-size: 20px; line-height: 28px; }
.notice { position: relative; margin-left: 14px; }
.notice b { position: absolute; left: 11px; top: 11px; width: 24px; height: 24px; border: 1px solid #888; border-radius: 50%; background: #d3d9db; font-size: 18px; line-height: 22px; text-align: center; }

.toast { position: absolute; right: 24px; bottom: 77px; width: 546px; height: 151px; background: #e1e1e1; display: flex; padding: 29px 0 0 24px; gap: 24px; }
.toast > svg { margin-top: 17px; }
.toast h2 { margin: 0; font-size: 22px; line-height: 28px; color: #000; }
.toast p { margin: 0; font-size: 22px; line-height: 30px; color: #444; }
.toast small { display: block; font-size: 18px; line-height: 38px; color: #707070; }
.mark { position: absolute; right: 112px; bottom: 43px; width: 390px; color: #fff; opacity: .74; text-shadow: 0 0 3px #888, 0 0 3px #999; pointer-events: none; }
.logo { display: flex; align-items: flex-end; height: 126px; }
.bai { font: 700 84px/84px "Liberation Sans", sans-serif; width: 136px; }
.paw { position: relative; }
.paw span { position: absolute; left: 18px; top: 72px; width: 70px; text-align: center; font: 700 54px/50px "Liberation Sans", sans-serif; }
.jy { font-size: 64px; font-weight: 900; line-height: 76px; margin-left: 4px; }
.url { font-size: 45px; line-height: 58px; margin-top: 1px; }
</style>
